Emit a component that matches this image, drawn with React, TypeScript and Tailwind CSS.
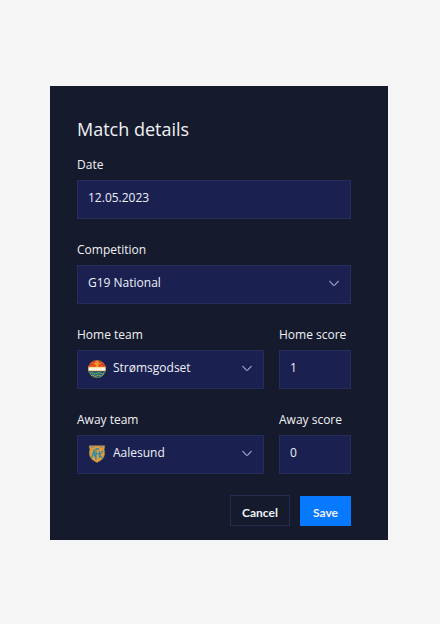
import { useState, type ReactNode } from "react";

const fieldClass =
  "block h-[39px] w-full appearance-none rounded-none border border-[#272c58] bg-[#1a2150] text-xs leading-4 text-[#eef0f8] outline-none focus:border-[#0679ff]";

function Chevron() {
  return (
    <svg
      className="pointer-events-none absolute top-[15px] right-3 h-[7px] w-[10px]"
      viewBox="0 0 10 7"
      fill="none"
      stroke="#9aa1d6"
      strokeWidth="1.2"
      strokeLinecap="round"
      strokeLinejoin="round"
      aria-hidden="true"
    >
      <path d="M0.8 1.3 4.1 4.9Q5 5.7 5.9 4.9L9.2 1.3" />
    </svg>
  );
}

function StromsgodsetCrest() {
  return (
    <svg className="h-[18px] w-[18px]" viewBox="0 0 18 18" aria-hidden="true">
      <defs>
        <clipPath id="round-crest">
          <circle cx="9" cy="9" r="8.8" />
        </clipPath>
      </defs>
      <g clipPath="url(#round-crest)">
        <rect width="18" height="7" fill="#e0301f" />
        <path d="M3 6.2 7 4.2M4 3 7 3.4M15 6.2 11 4.2M14 3 11 3.4" stroke="#ee9a2e" strokeWidth="0.7" fill="none" />
        <path d="M7.6 4.5h2.8V7H7.6z" fill="#ef9a2c" />
        <circle cx="9" cy="3.2" r="2.1" fill="#f6a42a" />
        <circle cx="9" cy="3.2" r="0.7" fill="#e0662a" />
        <rect y="7" width="18" height="4" fill="#fffaf0" />
        <path d="M0 7h18M0 11h18" stroke="#eda52f" strokeWidth="0.8" />
        <path d="M4 9h10" stroke="#ecd9a5" strokeWidth="0.8" strokeDasharray="1 1" />
        <rect y="11.4" width="18" height="7" fill="#126384" />
        <path d="M2 13.4q1.8-1.6 3.5 0t3.5 0 3.5 0 3.5 0M3 15.7q1.5-1.4 3 0t3 0 3 0 3 0" stroke="#b9ba40" strokeWidth="0.8" fill="none" />
      </g>
      <circle cx="9" cy="9" r="8.6" fill="none" stroke="#c9a03a" strokeWidth="0.5" />
    </svg>
  );
}

function AalesundCrest() {
  return (
    <svg className="h-[18px] w-[18px]" viewBox="0 0 18 18" aria-hidden="true">
      <path
        d="M1.4.8h15.2v2.4l-.7.8c1.1 3 1 6.4-.8 9-1.4 2.2-3.7 3-6.1 4.4C6.6 16 4.3 15.2 2.9 13 1.1 10.4 1 7 2.1 4l-.7-.8z"
        fill="#e09d38"
        stroke="#a98a58"
        strokeWidth="0.6"
      />
      <path d="M3 2.1h3.2M11.8 2.1H15" stroke="#3c94ad" strokeWidth="0.9" />
      <path
        d="M3.5 13 6 5.5 7.4 13M4.5 10h2.8M8 15V4.2Q9.5 2.8 11.2 4.6M8 8.8h3M11.4 6v7M15 5.8l-3.5 4 3 3.5"
        fill="none"
        stroke="#2389b5"
        strokeWidth="1.1"
      />
    </svg>
  );
}

function Field({ id, label, children }: { id: string; label: string; children: ReactNode }) {
  return (
    <div className="flex min-w-0 flex-col gap-[7px]">
      <label htmlFor={id} className="text-xs leading-4 whitespace-nowrap">
        {label}
      </label>
      {children}
    </div>
  );
}

function SelectField({
  id,
  label,
  options,
  crest,
}: {
  id: string;
  label: string;
  options: string[];
  crest?: ReactNode;
}) {
  return (
    <Field id={id} label={label}>
      <div className="relative">
        <select id={id} className={`${fieldClass} pr-8 pb-[3px] ${crest ? "pl-[35px]" : "pl-[10px]"}`}>
          {options.map((option) => (
            <option key={option}>{option}</option>
          ))}
        </select>
        {crest && <span className="pointer-events-none absolute top-[10px] left-[11px]">{crest}</span>}
        <Chevron />
      </div>
    </Field>
  );
}

function TextField({ id, label, initial }: { id: string; label: string; initial: string }) {
  const [value, setValue] = useState(initial);
  return (
    <Field id={id} label={label}>
      <input
        id={id}
        type="text"
        value={value}
        onChange={(event) => setValue(event.target.value)}
        className={`${fieldClass} px-[10px] pb-[5px]`}
      />
    </Field>
  );
}

export default function App() {
  return (
    <main className="min-h-screen bg-[#f5f5f5] pt-[86px] pr-[52px] pb-[84px] pl-[50px] font-['Open_Sans','Noto_Sans',sans-serif] text-[#f0f1f5]">
      <form
        onSubmit={(event) => event.preventDefault()}
        className="bg-[#151a2c] pt-[30px] pr-[37px] pb-[14px] pl-[27px]"
      >
        <h1 className="mb-[15px] text-lg leading-[26px] font-normal">Match details</h1>
        <div className="flex flex-col gap-[23px]">
          <TextField id="date" label="Date" initial="12.05.2023" />
          <SelectField id="competition" label="Competition" options={["G19 National"]} />
          <div className="grid grid-cols-[1fr_72px] gap-[15px]">
            <SelectField
              id="home-team"
              label="Home team"
              options={["Strømsgodset", "Aalesund"]}
              crest={<StromsgodsetCrest />}
            />
            <TextField id="home-score" label="Home score" initial="1" />
          </div>
          <div className="grid grid-cols-[1fr_72px] gap-[15px]">
            <SelectField
              id="away-team"
              label="Away team"
              options={["Aalesund", "Strømsgodset"]}
              crest={<AalesundCrest />}
            />
            <TextField id="away-score" label="Away score" initial="0" />
          </div>
        </div>
        <div className="mt-[21px] flex items-end justify-end gap-[10px] font-['Lato','Noto_Sans',sans-serif]">
          <button
            type="button"
            className="h-[31px] w-[60px] border border-[#272a50] pt-1 text-xs leading-4 font-bold"
          >
            Cancel
          </button>
          <button type="submit" className="h-[30px] w-[51px] bg-[#0679ff] pt-1 text-xs leading-4 font-bold">
            Save
          </button>
        </div>
      </form>
    </main>
  );
}
